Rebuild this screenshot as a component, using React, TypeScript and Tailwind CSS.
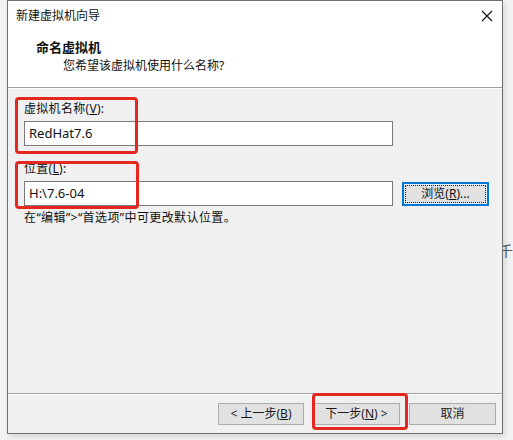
import React from "react";

const font = {
  fontFamily: '"Noto Sans", "Noto Sans CJK SC", sans-serif',
};

function Btn({ children, w }: { children: React.ReactNode; w: string }) {
  return (
    <div
      className={`${w} h-[22px] flex items-center justify-center border border-[#adadad] bg-[#e1e1e1] text-[12px] text-[#1a1a1a] leading-none`}
    >
      {children}
    </div>
  );
}

export default function App() {
  return (
    <div
      className="w-[513px] h-[440px] bg-[#f3f3f3] overflow-hidden flex text-black"
      style={font}
    >
      <div className="relative ml-[7px] w-[498px] h-[434px] border border-[#707070] bg-[#f0f0f0] flex flex-col shadow-[2px_3px_6px_rgba(0,0,0,0.12)]">
        {/* header (white) */}
        <div className="h-[86px] bg-white flex flex-col">
          <div className="h-[30px] flex items-center justify-between pl-[8px] pr-[8px]">
            <span className="text-[12px] text-[#111]">新建虚拟机向导</span>
            <svg width="12" height="12" viewBox="0 0 12 12" className="mr-[1px]">
              <path d="M1 1 L11 11 M11 1 L1 11" stroke="#111" strokeWidth="1.1" />
            </svg>
          </div>
          <div className="pl-[28px] mt-[8px] text-[13px] font-bold leading-[16px] text-[#111]">
            命名虚拟机
          </div>
          <div className="pl-[55px] mt-[3px] text-[12px] leading-[16px] text-[#111]">
            您希望该虚拟机使用什么名称?
          </div>
        </div>
        <div className="h-px bg-[#a0a0a0]" />
        <div className="h-px bg-white" />
        {/* body */}
        <div className="flex-1 flex flex-col pl-[16px] pt-[12px] text-[12px] text-[#111]">
          <div className="leading-[16px] h-[16px] tracking-[0.3px]">
            虚拟机名称(<span className="underline">V</span>):
          </div>
          <div className="mt-[4px] w-[369px] h-[25px] border border-[#7a7a7a] bg-white flex items-center pl-[4px] text-[13px]">
            RedHat7.6
          </div>
          <div className="mt-[15px] leading-[16px] h-[16px] tracking-[0.3px]">
            位置(<span className="underline">L</span>):
          </div>
          <div className="mt-[4px] flex items-center gap-[9px]">
            <div className="w-[369px] h-[25px] border border-[#7a7a7a] bg-white flex items-center pl-[4px] text-[13px]">
              H:\7.6-04
            </div>
            <div className="w-[87px] h-[24px] border-2 border-[#0078d7] bg-[#e5f1fb] p-px">
              <div className="w-full h-full border border-dotted border-[#222] bg-[#e1e1e1] flex items-center justify-center text-[12px] leading-none">
                浏览(<span className="underline">R</span>)...
              </div>
            </div>
          </div>
          <div className="mt-[4px] leading-[16px] tracking-[0.4px]">
            在“编辑”&gt;“首选项”中可更改默认位置。
          </div>
        </div>
        <div className="h-px bg-[#a0a0a0]" />
        <div className="h-px bg-white" />
        {/* footer */}
        <div className="h-[38px] flex justify-end items-start pt-[8px] pr-[6px] gap-[9px]">
          <Btn w="w-[86px]">
            &lt; 上一步(<span className="underline">B</span>)
          </Btn>
          <Btn w="w-[87px]">
            下一步(<span className="underline">N</span>) &gt;
          </Btn>
          <Btn w="w-[87px]">取消</Btn>
        </div>

        {/* red annotation boxes */}
        <div className="absolute left-[7px] top-[96px] w-[123px] h-[57px] border-[3px] border-[#e5281f] rounded-[4px]" />
        <div className="absolute left-[7px] top-[160px] w-[124px] h-[48px] border-[3px] border-[#e5281f] rounded-[4px]" />
        <div className="absolute left-[304px] top-[392px] w-[96px] h-[37px] border-[3px] border-[#e5281f] rounded-[4px]" />
      </div>
      <div className="flex-1 flex flex-col justify-start pt-[244px]">
        <span className="text-[14px] text-[#555] leading-none -ml-[4px]">千</span>
      </div>
    </div>
  );
}
